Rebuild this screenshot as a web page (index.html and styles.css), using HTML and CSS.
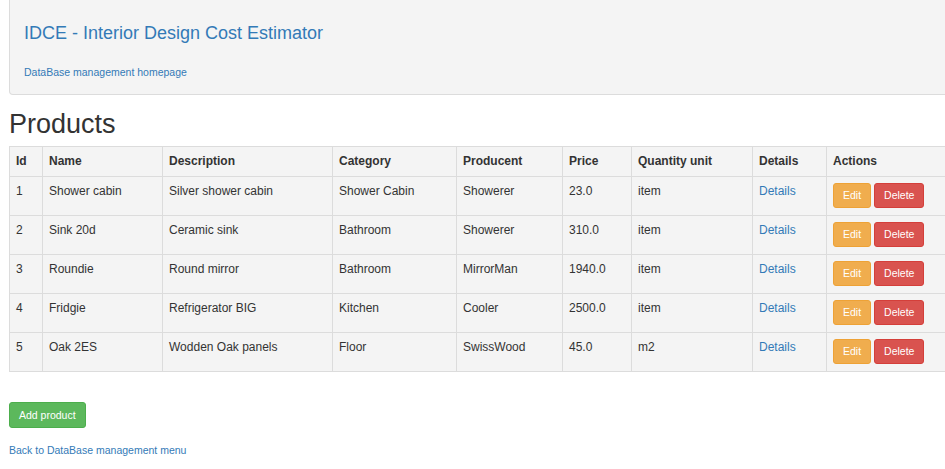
FILE: index.html
```html
<!DOCTYPE html>
<html lang="en">
<head>
<meta charset="utf-8">
<title>Products</title>
<link rel="stylesheet" href="styles.css">
</head>
<body>
<div class="page">
  <header class="jumbotron">
    <h4 class="site-title"><a href="#">IDCE - Interior Design Cost Estimator</a></h4>
    <a class="small-link" href="#">DataBase management homepage</a>
  </header>

  <h1 class="page-title">Products</h1>

  <div class="table-clip">
    <table class="products">
      <colgroup>
        <col class="c-id"><col class="c-name"><col class="c-desc"><col class="c-cat"><col class="c-prod"><col class="c-price"><col class="c-qty"><col class="c-det"><col class="c-act">
      </colgroup>
      <thead>
        <tr><th>Id</th><th>Name</th><th>Description</th><th>Category</th><th>Producent</th><th>Price</th><th>Quantity unit</th><th>Details</th><th>Actions</th></tr>
      </thead>
      <tbody>
        <tr><td>1</td><td>Shower cabin</td><td>Silver shower cabin</td><td>Shower Cabin</td><td>Showerer</td><td>23.0</td><td>item</td><td><a href="#">Details</a></td><td class="actions"><span class="btn btn-warning">Edit</span><span class="btn btn-danger">Delete</span></td></tr>
        <tr><td>2</td><td>Sink 20d</td><td>Ceramic sink</td><td>Bathroom</td><td>Showerer</td><td>310.0</td><td>item</td><td><a href="#">Details</a></td><td class="actions"><span class="btn btn-warning">Edit</span><span class="btn btn-danger">Delete</span></td></tr>
        <tr><td>3</td><td>Roundie</td><td>Round mirror</td><td>Bathroom</td><td>MirrorMan</td><td>1940.0</td><td>item</td><td><a href="#">Details</a></td><td class="actions"><span class="btn btn-warning">Edit</span><span class="btn btn-danger">Delete</span></td></tr>
        <tr><td>4</td><td>Fridgie</td><td>Refrigerator BIG</td><td>Kitchen</td><td>Cooler</td><td>2500.0</td><td>item</td><td><a href="#">Details</a></td><td class="actions"><span class="btn btn-warning">Edit</span><span class="btn btn-danger">Delete</span></td></tr>
        <tr><td>5</td><td>Oak 2ES</td><td>Wodden Oak panels</td><td>Floor</td><td>SwissWood</td><td>45.0</td><td>m2</td><td><a href="#">Details</a></td><td class="actions"><span class="btn btn-warning">Edit</span><span class="btn btn-danger">Delete</span></td></tr>
      </tbody>
    </table>
  </div>

  <div class="add-row"><span class="btn btn-success btn-add">Add product</span></div>
  <a class="small-link back" href="#">Back to DataBase management menu</a>
</div>
</body>
</html>
```

FILE: styles.css
```css
html, body {
  margin: 0;
  padding: 0;
  overflow: hidden;
  background: #fff;
}
body {
  font-family: "Liberation Sans", Arial, Helvetica, sans-serif;
  color: #333;
  font-size: 12px;
  line-height: 17px;
}
a {
  color: #337ab7;
  text-decoration: none;
}
.page {
  padding-left: 9px;
  overflow: hidden;
}
.jumbotron {
  background: #f4f4f4;
  border: 1px solid #dcdcdc;
  border-top: none;
  border-radius: 0 0 4px 4px;
  padding: 23px 14px 14px;
  margin-right: -20px;
  display: flex;
  flex-direction: column;
  align-items: flex-start;
}
.site-title {
  margin: 0 0 22px;
  font-size: 18px;
  line-height: 20px;
  font-weight: normal;
}
.small-link {
  font-size: 10.5px;
  line-height: 15px;
}
.page-title {
  margin: 14px 0 7px;
  font-size: 27px;
  line-height: 30px;
  font-weight: normal;
  color: #333;
}
.table-clip {
  overflow: hidden;
}
.products {
  border-collapse: collapse;
  table-layout: fixed;
  width: 1017px;
  background: #f4f4f4;
  border: 1px solid #dcdcdc;
}
.c-id { width: 33px; }
.c-name { width: 120px; }
.c-desc { width: 170px; }
.c-cat { width: 124px; }
.c-prod { width: 106px; }
.c-price { width: 69px; }
.c-qty { width: 121px; }
.c-det { width: 74px; }
.c-act { width: 200px; }
.products th,
.products td {
  border: 1px solid #dcdcdc;
  padding: 6px;
  text-align: left;
  vertical-align: top;
  font-size: 12px;
  line-height: 17px;
  white-space: nowrap;
}
.products th {
  font-weight: bold;
}
.products td.actions {
  padding: 6px 6px 7px;
}
.actions {
  font-size: 0;
}
.btn {
  display: inline-block;
  box-sizing: border-box;
  font-size: 10.5px;
  line-height: 13px;
  padding: 5px 9px;
  border: 1px solid transparent;
  border-radius: 3px;
  color: #fff;
  vertical-align: top;
}
.btn-warning {
  background: #f0ad4e;
  border-color: #eea236;
  margin-right: 3px;
}
.btn-danger {
  background: #d9534f;
  border-color: #d43f3a;
}
.btn-success {
  background: #5cb85c;
  border-color: #4cae4c;
}
.add-row {
  margin-top: 30px;
  display: flex;
}
.btn-add {
  line-height: 14px;
}
.back {
  display: block;
  margin-top: 15px;
}
```
